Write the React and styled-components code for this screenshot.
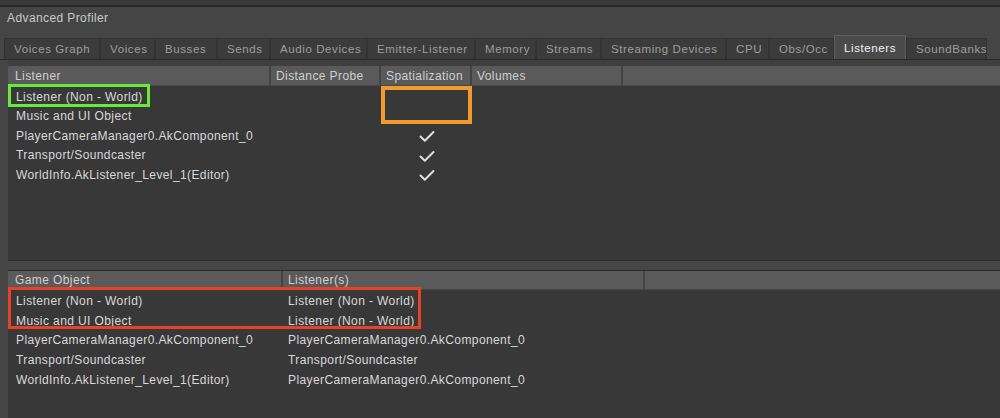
import React from "react";
import styled, { createGlobalStyle } from "styled-components";

const GlobalStyle = createGlobalStyle`
  html, body {
    margin: 0;
    padding: 0;
    background: #454545;
  }
  body {
    font-family: "Liberation Sans", Arial, sans-serif;
    font-size: 12px;
    letter-spacing: 0.4px;
  }
`;

const Window = styled.div`
  width: 1000px;
  height: 418px;
  display: flex;
  flex-direction: column;
  background: #454545;
  overflow: hidden;
`;

const TopStrip = styled.div`
  height: 5px;
  background: #3a3a3a;
  border-bottom: 2px solid #272727;
`;

const Title = styled.div`
  height: 28px;
  box-sizing: border-box;
  padding: 3px 0 0 7px;
  line-height: 16px;
  color: #c9c9c9;
`;

const TabBar = styled.div`
  display: flex;
  align-items: flex-end;
  height: 24px;
  padding-left: 4px;
`;

const Tab = styled.div`
  box-sizing: border-box;
  width: ${(p) => p.$w}px;
  height: ${(p) => (p.$active ? "24px" : "21px")};
  padding-left: 9px;
  display: flex;
  align-items: center;
  white-space: nowrap;
  overflow: hidden;
  font-size: 11.5px;
  letter-spacing: 0.6px;
  background: ${(p) => (p.$active ? "#4a4a4a" : "#3b3b3b")};
  color: ${(p) => (p.$active ? "#f2f2f2" : "#9e9e9e")};
  border: 1px solid ${(p) => (p.$active ? "#5e5e5e" : "#333333")};
  border-bottom: none;
`;

const Body = styled.div`
  flex: 1;
  display: flex;
  flex-direction: column;
  padding-left: 8px;
  border-top: 1px solid #2b2b2b;
  min-height: 0;
`;

const TopPane = styled.div`
  box-sizing: border-box;
  height: 200px;
  display: flex;
  flex-direction: column;
  background: #3f3f3f;
  padding-top: 6px;
`;

const Splitter = styled.div`
  height: 9px;
  background: #464646;
  border-top: 1px solid #2c2c2c;
  border-bottom: 1px solid #2c2c2c;
`;

const BottomPane = styled.div`
  flex: 1;
  display: flex;
  flex-direction: column;
  background: #383838;
`;

const HeaderRow = styled.div`
  display: grid;
  grid-template-columns: ${(p) => p.$cols};
  height: ${(p) => p.$h}px;
  background: #5a5a5a;
  border-bottom: 1px solid #474747;
  color: #cfcfcf;
`;

const HeaderCell = styled.div`
  display: flex;
  align-items: center;
  padding-left: ${(p) => (p.$first ? "7px" : "5px")};
  border-right: 2px solid #434343;
  white-space: nowrap;
  overflow: hidden;

  &:last-child {
    border-right: none;
  }
`;

const Rows = styled.div`
  position: relative;
  flex: 1;
  background: #383838;
  padding-top: ${(p) => p.$pad || 0}px;
`;

const Row = styled.div`
  display: grid;
  grid-template-columns: ${(p) => p.$cols};
  height: ${(p) => p.$h}px;
  color: #d8d8d8;
`;

const Cell = styled.div`
  display: flex;
  align-items: center;
  justify-content: ${(p) => (p.$center ? "center" : "flex-start")};
  padding-left: ${(p) => (p.$center ? "0" : p.$first ? "8px" : "5px")};
  white-space: nowrap;
`;

const Mark = styled.div`
  position: absolute;
  box-sizing: border-box;
  border: ${(p) => p.$w}px solid ${(p) => p.$color};
  pointer-events: none;
`;

const Check = () => (
  <svg width="16" height="13" viewBox="0 0 16 13" style={{ marginTop: 2 }}>
    <path
      d="M1.5 6.5 L5.8 10.8 L14.5 2"
      fill="none"
      stroke="#dedede"
      strokeWidth="2"
      strokeLinecap="round"
      strokeLinejoin="round"
    />
  </svg>
);

const tabs = [
  ["Voices Graph", 96],
  ["Voices", 55],
  ["Busses", 62],
  ["Sends", 53],
  ["Audio Devices", 97],
  ["Emitter-Listener", 108],
  ["Memory", 61],
  ["Streams", 65],
  ["Streaming Devices", 125],
  ["CPU", 43],
  ["Obs/Occ", 65],
  ["Listeners", 72],
  ["SoundBanks", 81],
];

const listeners = [
  { name: "Listener (Non - World)", spat: false },
  { name: "Music and UI Object", spat: false },
  { name: "PlayerCameraManager0.AkComponent_0", spat: true },
  { name: "Transport/Soundcaster", spat: true },
  { name: "WorldInfo.AkListener_Level_1(Editor)", spat: true },
];

const gameObjects = [
  ["Listener (Non - World)", "Listener (Non - World)"],
  ["Music and UI Object", "Listener (Non - World)"],
  ["PlayerCameraManager0.AkComponent_0", "PlayerCameraManager0.AkComponent_0"],
  ["Transport/Soundcaster", "Transport/Soundcaster"],
  ["WorldInfo.AkListener_Level_1(Editor)", "PlayerCameraManager0.AkComponent_0"],
];

const topCols = "263px 110px 91px 151px 1fr";
const bottomCols = "275px 362px 1fr";

const App = () => {
  return (
    <Window>
      <GlobalStyle />
      <TopStrip />
      <Title>Advanced Profiler</Title>
      <TabBar>
        {tabs.map(([t, w]) => (
          <Tab key={t} $w={w} $active={t === "Listeners"}>
            {t}
          </Tab>
        ))}
      </TabBar>
      <Body>
        <TopPane>
          <HeaderRow $cols={topCols} $h={19}>
            <HeaderCell $first>Listener</HeaderCell>
            <HeaderCell>Distance Probe</HeaderCell>
            <HeaderCell>Spatialization</HeaderCell>
            <HeaderCell>Volumes</HeaderCell>
            <HeaderCell />
          </HeaderRow>
          <Rows $pad={1}>
            {listeners.map((l) => (
              <Row key={l.name} $cols={topCols} $h={19.5}>
                <Cell $first>{l.name}</Cell>
                <Cell />
                <Cell $center>{l.spat && <Check />}</Cell>
                <Cell />
                <Cell />
              </Row>
            ))}
            <Mark
              $color="#66ec38"
              $w={3}
              style={{ top: -2, left: 0, width: 142, height: 23 }}
            />
            <Mark
              $color="#f39a2e"
              $w={4}
              style={{ top: 0, left: 373, width: 91, height: 38 }}
            />
          </Rows>
        </TopPane>
        <Splitter />
        <BottomPane>
          <HeaderRow $cols={bottomCols} $h={18}>
            <HeaderCell $first>Game Object</HeaderCell>
            <HeaderCell>Listener(s)</HeaderCell>
            <HeaderCell />
          </HeaderRow>
          <Rows $pad={1}>
            {gameObjects.map(([obj, lis], i) => (
              <Row key={i} $cols={bottomCols} $h={19.75}>
                <Cell $first>{obj}</Cell>
                <Cell>{lis}</Cell>
                <Cell />
              </Row>
            ))}
            <Mark
              $color="#e8412a"
              $w={3}
              style={{ top: -3, left: 0, width: 413, height: 42 }}
            />
          </Rows>
        </BottomPane>
      </Body>
    </Window>
  );
};

export default App;
